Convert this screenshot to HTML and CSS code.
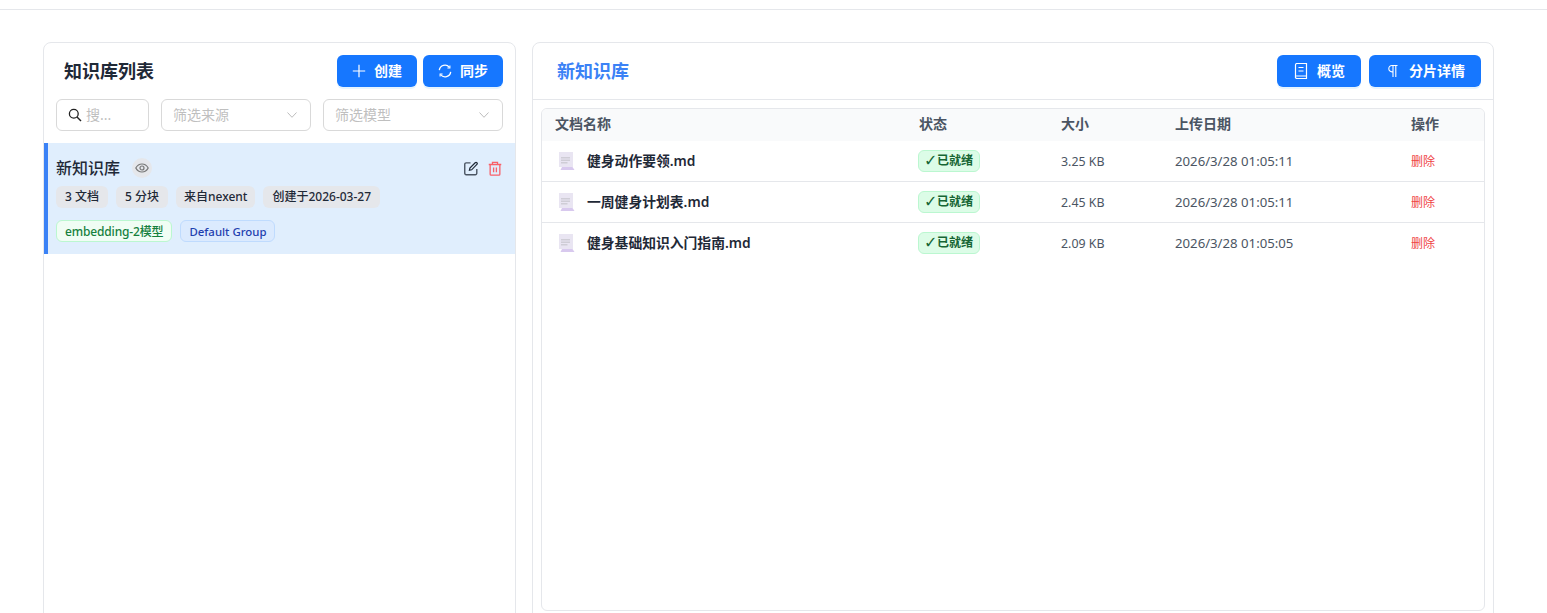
FILE: index.html
```html
<!DOCTYPE html>
<html lang="zh-CN">
<head>
<meta charset="utf-8">
<title>知识库</title>
<link rel="stylesheet" href="styles.css">
</head>
<body>
<div class="topbar"></div>
<main class="main">
  <section class="panel left">
    <header class="left-head">
      <h2 class="list-title">知识库列表</h2>
      <div class="btns">
        <button class="btn btn-create"><svg class="ic" viewBox="0 0 14 14"><path d="M7 .8v12.400M.8 7h12.400" fill="none" stroke="currentColor" stroke-width="1.200"/></svg>创建</button>
        <button class="btn btn-create"><svg class="ic" viewBox="0 0 14 14"><path d="M1.300 6.200A5.700 5.700 0 0 1 11.400 3.400M12.700 7.800A5.700 5.700 0 0 1 2.600 10.600" fill="none" stroke="currentColor" stroke-width="1.300"/><path d="M11.900 1.400v2.600H9.400M2.100 12.600V10h2.500" fill="none" stroke="currentColor" stroke-width="1.100"/></svg>同步</button>
      </div>
    </header>
    <div class="filters">
      <div class="field search"><svg class="search-ic" viewBox="0 0 14 14"><circle cx="5.800" cy="5.800" r="4.400" fill="none" stroke="#222" stroke-width="1.300"/><path d="M9 9l4 4" stroke="#222" stroke-width="1.400"/></svg><span>搜...</span></div>
      <div class="field select source"><span>筛选来源</span><svg class="chev" viewBox="0 0 10 6"><path d="M.5.5L5 5.300 9.500.5" fill="none" stroke="#bdbdbd" stroke-width="1"/></svg></div>
      <div class="field select model"><span>筛选模型</span><svg class="chev" viewBox="0 0 10 6"><path d="M.5.5L5 5.300 9.500.5" fill="none" stroke="#bdbdbd" stroke-width="1"/></svg></div>
    </div>
    <article class="kb-item">
      <div class="kb-top">
        <span class="kb-name">新知识库</span>
        <span class="eye"><svg viewBox="0 0 14 14"><path d="M.8 7C2.200 4.400 4.400 3 7 3s4.800 1.400 6.200 4c-1.400 2.600-3.600 4-6.200 4S2.200 9.600.8 7z" fill="none" stroke="#777" stroke-width="1.200"/><circle cx="7" cy="7" r="2" fill="none" stroke="#777" stroke-width="1.200"/></svg></span>
        <span class="kb-actions">
          <svg class="act" viewBox="0 0 15 15"><path d="M13.700 8v4.700a1.500 1.500 0 0 1-1.500 1.500H2.300a1.500 1.500 0 0 1-1.500-1.500V3a1.500 1.500 0 0 1 1.500-1.500H7" fill="none" stroke="#4b5563" stroke-width="1.500"/><path d="M5.800 9.400l.5-2.400L12 1.300a1.200 1.200 0 0 1 1.800 1.800L8.200 8.900z" fill="none" stroke="#1f2937" stroke-width="1.300"/></svg>
          <svg class="act" viewBox="0 0 15 15"><path d="M.8 3.200h13.400M4.800 3V1h5.400v2M2.300 3.400v10.200a1 1 0 0 0 1 1h8.400a1 1 0 0 0 1-1V3.400M6 6.500v5M9 6.500v5" fill="none" stroke="#f8606a" stroke-width="1.400"/></svg>
        </span>
      </div>
      <div class="chips">
        <span class="chip">3 文档</span><span class="chip">5 分块</span><span class="chip chip-src">来自nexent</span><span class="chip">创建于2026-03-27</span>
      </div>
      <div class="tags">
        <span class="tag tag-green">embedding-2模型</span><span class="tag tag-blue">Default Group</span>
      </div>
    </article>
  </section>
  <section class="panel right">
    <header class="right-head">
      <h2 class="kb-title">新知识库</h2>
      <div class="btns wide">
        <button class="btn btn-over"><svg class="ic16" viewBox="0 0 16 16"><path d="M2.500 13.500V2A1.500 1.500 0 0 1 4 .5h9.500v15H4a1.500 1.500 0 0 1-1.500-2zM2.500 13h11M5.500 4.500h5M5.500 8h5" fill="none" stroke="currentColor" stroke-width="1.200"/></svg>概览</button>
        <button class="btn btn-chunk"><svg class="ic16" viewBox="0 0 16 16"><path d="M12.500 2.500H7a3.200 3.200 0 0 0 0 6.400h1M8 2.500v11.500M10.800 2.500v11.500" fill="none" stroke="currentColor" stroke-width="1.100"/></svg>分片详情</button>
      </div>
    </header>
    <div class="table-wrap">
      <table class="docs">
        <thead>
          <tr><th class="c-name">文档名称</th><th class="c-status">状态</th><th class="c-size">大小</th><th class="c-date">上传日期</th><th>操作</th></tr>
        </thead>
        <tbody>
          <tr>
            <td><div class="doc"><svg class="file" viewBox="0 0 16 18"><path d="M0 0h14v15H0z" fill="#e9e5f2"/><path d="M2 5h9v1.500H2zM2 7.500h9V9H2zM2 10h6.500v1.500H2z" fill="#cfcdd6"/><path d="M1.500 18l1.500-3h10.500l2 3z" fill="#d8c9ee"/></svg><span>健身动作要领.md</span></div></td>
            <td><span class="ready"><span class="check">✓</span>已就绪</span></td><td class="meta">3.25 KB</td><td class="date">2026/3/28 01:05:11</td><td class="meta"><a class="del">删除</a></td>
          </tr>
          <tr>
            <td><div class="doc"><svg class="file" viewBox="0 0 16 18"><path d="M0 0h14v15H0z" fill="#e9e5f2"/><path d="M2 5h9v1.500H2zM2 7.500h9V9H2zM2 10h6.500v1.500H2z" fill="#cfcdd6"/><path d="M1.500 18l1.500-3h10.500l2 3z" fill="#d8c9ee"/></svg><span>一周健身计划表.md</span></div></td>
            <td><span class="ready"><span class="check">✓</span>已就绪</span></td><td class="meta">2.45 KB</td><td class="date">2026/3/28 01:05:11</td><td class="meta"><a class="del">删除</a></td>
          </tr>
          <tr>
            <td><div class="doc"><svg class="file" viewBox="0 0 16 18"><path d="M0 0h14v15H0z" fill="#e9e5f2"/><path d="M2 5h9v1.500H2zM2 7.500h9V9H2zM2 10h6.500v1.500H2z" fill="#cfcdd6"/><path d="M1.500 18l1.500-3h10.500l2 3z" fill="#d8c9ee"/></svg><span>健身基础知识入门指南.md</span></div></td>
            <td><span class="ready"><span class="check">✓</span>已就绪</span></td><td class="meta">2.09 KB</td><td class="date">2026/3/28 01:05:05</td><td class="meta"><a class="del">删除</a></td>
          </tr>
        </tbody>
      </table>
    </div>
  </section>
</main>
</body>
</html>
```
FILE: styles.css
```css
* { box-sizing: border-box; }
html, body { margin: 0; height: 613px; overflow: hidden; background: #fff; }
body { font-family: "Noto Sans", "Noto Sans CJK SC", sans-serif; color: #1f2937; font-size: 12px; }
.topbar { height: 10px; border-bottom: 1px solid #e5e7eb; }
.main { display: flex; gap: 16px; padding: 32px 53px 0 43px; }
.panel { background: #fff; border: 1px solid #e5e7eb; border-radius: 8px; height: 600px; }
.left { width: 473px; flex: none; }
.right { width: 962px; flex: none; }
.left-head { display: flex; justify-content: space-between; align-items: center; padding: 12px 12px 0 20px; }
.list-title { margin: 0; font-size: 18px; font-weight: 600; line-height: 32px; color: #1f2937; }
.btns { display: flex; gap: 6px; }
.btns.wide { gap: 8px; }
.btn { display: flex; align-items: center; justify-content: center; gap: 8px; height: 32px; border: 0; border-radius: 6px; background: #1677ff; color: #fff; font: 600 14px/20px "Noto Sans", "Noto Sans CJK SC", sans-serif; box-shadow: 0 2px 0 rgba(5,145,255,.1); padding: 0; }
.btn-create { width: 80px; }
.btn-over { width: 84px; }
.btn-chunk { width: 112px; }
.ic { width: 14px; height: 14px; }
.ic16 { width: 16px; height: 16px; }
.filters { display: flex; gap: 12px; padding: 12px 12px 0; }
.field { display: flex; align-items: center; height: 32px; border: 1px solid #d9d9d9; border-radius: 6px; color: #bfbfbf; font-size: 14px; line-height: 20px; background: #fff; }
.search { width: 93px; padding-left: 11px; gap: 4px; }
.search-ic { width: 14px; height: 14px; }
.select { padding: 0 13px 0 11px; justify-content: space-between; }
.source { width: 150px; }
.model { width: 180px; }
.chev { width: 10px; height: 6px; }
.kb-item { margin-top: 12px; height: 111px; background: #e0eefd; border-left: 4px solid #3b82f6; padding: 14px 13px 0 8px; }
.kb-top { display: flex; align-items: center; height: 22px; }
.kb-name { font-size: 16px; font-weight: 500; line-height: 22px; color: #1f2937; }
.eye { display: flex; align-items: center; justify-content: center; width: 20px; height: 20px; border-radius: 50%; background: #e5e7eb; margin-left: 12px; }
.eye svg { width: 14px; height: 14px; }
.kb-actions { margin-left: auto; display: flex; gap: 10px; }
.act { width: 14px; height: 15px; }
.chips { display: flex; gap: 8px; margin-top: 7px; }
.chip { height: 22px; line-height: 22px; padding: 0 9px; border-radius: 6px; background: #e5e7eb; font-size: 12px; font-weight: 500; color: #1f2937; }
.chip-src { padding: 0 8px; }
.tags { display: flex; gap: 8px; margin-top: 12px; }
.tag { height: 22px; line-height: 21px; padding: 0 8px; border: 1px solid; border-radius: 6px; font-size: 12px; font-weight: 500; }
.tag-green { background: #f0fdf4; border-color: #bbf7d0; color: #15803d; letter-spacing: -.15px; }
.tag-blue { background: #dbeafe; border-color: #bfdbfe; color: #1e40af; font-size: 11.400px; }
.right-head { display: flex; justify-content: space-between; align-items: center; height: 57px; padding: 0 12px 0 24px; border-bottom: 1px solid #e5e7eb; }
.kb-title { margin: 0; font-size: 18px; line-height: 28px; font-weight: 600; color: #3b82f6; }
.table-wrap { margin: 8px 8px 0; height: 503px; border: 1px solid #e5e7eb; border-radius: 6px; overflow: hidden; }
.docs { width: 100%; border-collapse: separate; border-spacing: 0; table-layout: fixed; }
.docs th { height: 32px; padding: 0 13px 3px; text-align: left; background: #f9fafb; font-size: 14px; line-height: 20px; font-weight: 600; color: #4b5563; }
.docs td { height: 41px; padding: 0 13px; font-size: 12.400px; line-height: 18px; color: #4b5563; border-bottom: 1px solid #e5e7eb; }
.docs td.meta { padding-top: 2px; }
.docs td.date { font-size: 13.200px; }
.docs tr:last-child td { border-bottom-color: transparent; }
.c-name { width: 364px; }
.c-status { width: 142px; }
.c-size { width: 114px; }
.c-date { width: 236px; }
.doc { display: flex; align-items: center; gap: 12px; padding-left: 4px; font-size: 13.800px; line-height: 20px; font-weight: 600; color: #1f2937; }
.file { width: 16px; height: 18px; flex: none; }
.ready { display: inline-flex; align-items: center; width: 62px; height: 22px; line-height: 20px; padding-left: 5px; margin-left: -1px; border: 1px solid #bbf7d0; border-radius: 6px; background: #dcfce7; color: #166534; font-size: 12px; font-weight: 600; white-space: nowrap; }
.check { width: 13px; font-family: "DejaVu Sans", sans-serif; font-size: 16px; line-height: 1; }
.del { color: #ef4444; font-size: 12px; }
```
